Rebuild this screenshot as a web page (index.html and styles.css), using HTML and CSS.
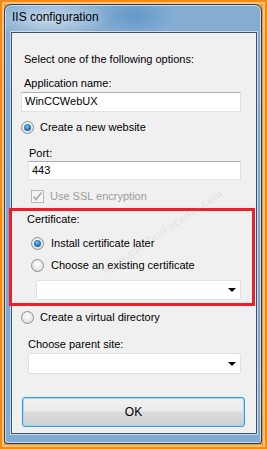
FILE: index.html
```html
<!DOCTYPE html>
<html>
<head>
<meta charset="utf-8">
<link rel="stylesheet" href="styles.css">
</head>
<body>
<div class="page">
  <div class="window">
    <div class="titlebar">IIS configuration</div>
    <div class="content">
      <div class="label intro">Select one of the following options:</div>
      <div class="label appname">Application name:</div>
      <div class="textbox appbox">WinCCWebUX</div>
      <div class="option opt-new"><span class="radio checked"></span><span>Create a new website</span></div>
      <div class="label port">Port:</div>
      <div class="textbox portbox">443</div>
      <div class="option opt-ssl disabled">
        <span class="check"><svg width="11" height="11" viewBox="0 0 11 11"><path d="M1.5 5.5 L4 8.5 L9.5 1.5" fill="none" stroke="#a7a7a7" stroke-width="1.6"/></svg></span>
        <span>Use SSL encryption</span>
      </div>
      <div class="certgroup">
        <div class="label cert">Certificate:</div>
        <div class="option opt-later"><span class="radio checked"></span><span>Install certificate later</span></div>
        <div class="option opt-existing"><span class="radio"></span><span>Choose an existing certificate</span></div>
        <div class="dropdown certdrop"><span class="arrow"></span></div>
      </div>
      <div class="option opt-virtual"><span class="radio"></span><span>Create a virtual directory</span></div>
      <div class="label parent">Choose parent site:</div>
      <div class="dropdown parentdrop"><span class="arrow"></span></div>
      <div class="button">OK</div>
      <div class="watermark">www.plcbhmi-scadas.com</div>
    </div>
  </div>
</div>
</body>
</html>
```
FILE: styles.css
```css
* { box-sizing: border-box; }
html, body { margin: 0; padding: 0; }
body {
  width: 267px;
  height: 449px;
  overflow: hidden;
  font-family: "Liberation Sans", Arial, sans-serif;
  font-size: 11px;
  color: #000;
}
.page {
  width: 267px;
  height: 449px;
  padding: 4px 5px 5px 4px;
  background: linear-gradient(#f8982e, #f7921f);
  box-shadow: inset 0 0 0 2px #f48a12, inset 0 0 0 4px #ffc27f;
}
.window {
  width: 258px;
  height: 440px;
  border: 1px solid #2b3f55;
  border-radius: 7px 7px 3px 3px;
  background:
    radial-gradient(ellipse 60px 20px at 45px 14px, rgba(255,255,255,0.55), rgba(255,255,255,0) 100%),
    radial-gradient(ellipse 40px 22px at 130px 10px, rgba(40,110,180,0.35), rgba(40,110,180,0) 100%),
    linear-gradient(#86aed3, #7aa6ce 40%, #80acd2 100%);
  box-shadow: inset 0 0 0 1px rgba(255,255,255,0.55);
  display: flex;
  flex-direction: column;
  padding: 0 4px 9px 6px;
}
.titlebar {
  height: 27px;
  padding: 5px 0 0 1px;
  font-size: 12px;
  line-height: 15px;
  color: #000;
}
.content {
  flex: 1;
  position: relative;
  background: #f0f0f0;
  border: 1px solid #3f5366;
  box-shadow: 0 0 0 1px rgba(255,255,255,0.55);
  display: flex;
  flex-direction: column;
  align-items: flex-start;
}
.label { line-height: 15px; height: 15px; white-space: nowrap; }
.intro { margin: 19px 0 0 12px; }
.appname { margin: 9px 0 0 12px; }
.textbox {
  background: #fff;
  border: 1px solid #e2e3ea;
  border-top-color: #abadb3;
  line-height: 17px;
  padding-left: 3px;
}
.appbox { margin: 1px 0 0 9px; width: 220px; height: 20px; }
.option {
  display: flex;
  align-items: center;
  height: 15px;
  line-height: 15px;
  white-space: nowrap;
}
.radio {
  width: 13px;
  height: 13px;
  border-radius: 50%;
  border: 1px solid #8d8f91;
  background: radial-gradient(circle at 50% 40%, #ffffff 0%, #eaeaea 50%, #cfd0d2 100%);
  margin-right: 6px;
  position: relative;
  flex: none;
}
.radio.checked::after {
  content: "";
  position: absolute;
  left: 2px;
  top: 2px;
  width: 7px;
  height: 7px;
  border-radius: 50%;
  background: radial-gradient(circle at 45% 40%, #7fc8f0 0%, #2b83c6 45%, #0f3f78 100%);
}
.opt-new { margin: 8px 0 0 9px; }
.port { margin: 11px 0 0 17px; }
.portbox { margin: 0 0 0 16px; width: 213px; height: 19px; line-height: 17px; }
.check {
  width: 13px;
  height: 13px;
  border: 1px solid #b8b8b8;
  background: #f4f4f4;
  margin-right: 6px;
  display: flex;
  align-items: center;
  justify-content: center;
  flex: none;
}
.check svg { display: block; }
.opt-ssl { margin: 9px 0 0 19px; }
.disabled { color: #9c9c9c; }
.certgroup {
  margin: 4px 0 0 -3px;
  width: 246px;
  border: 3px solid #e8212c;
  padding: 1px 0 3px 0;
  display: flex;
  flex-direction: column;
  align-items: flex-start;
}
.cert { margin: 0 0 0 15px; }
.opt-later { margin: 9px 0 0 19px; }
.opt-existing { margin: 7px 0 0 19px; }
.opt-later .radio, .opt-existing .radio { margin-right: 7px; }
.dropdown {
  position: relative;
  background: #fff;
  border: 1px solid #e0e0e0;
  border-radius: 2px;
}
.arrow {
  position: absolute;
  right: 4px;
  top: 7px;
  width: 0;
  height: 0;
  border-left: 4px solid transparent;
  border-right: 4px solid transparent;
  border-top: 4px solid #000;
}
.certdrop { margin: 7px 0 0 24px; width: 205px; height: 20px; }
.opt-virtual { margin: 4px 0 0 9px; }
.parent { margin: 12px 0 0 16px; }
.parentdrop { margin: 1px 0 0 16px; width: 213px; height: 21px; }
.parentdrop .arrow { top: 8px; }
.button {
  margin: 23px 0 0 10px;
  width: 223px;
  height: 30px;
  border: 1px solid #3a9ad9;
  border-radius: 3px;
  background: linear-gradient(#f2f2f2 0%, #ebebeb 45%, #dddddd 50%, #cfcfcf 100%);
  box-shadow: inset 0 0 0 1px #9fdcf6;
  display: flex;
  align-items: center;
  justify-content: center;
  font-size: 12px;
}
.watermark {
  position: absolute;
  left: 86px;
  top: 232px;
  transform: rotate(-34deg);
  transform-origin: left top;
  font-family: "Liberation Serif", serif;
  font-weight: bold;
  font-size: 13px;
  color: rgba(180, 150, 150, 0.14);
  white-space: nowrap;
  pointer-events: none;
}
```
